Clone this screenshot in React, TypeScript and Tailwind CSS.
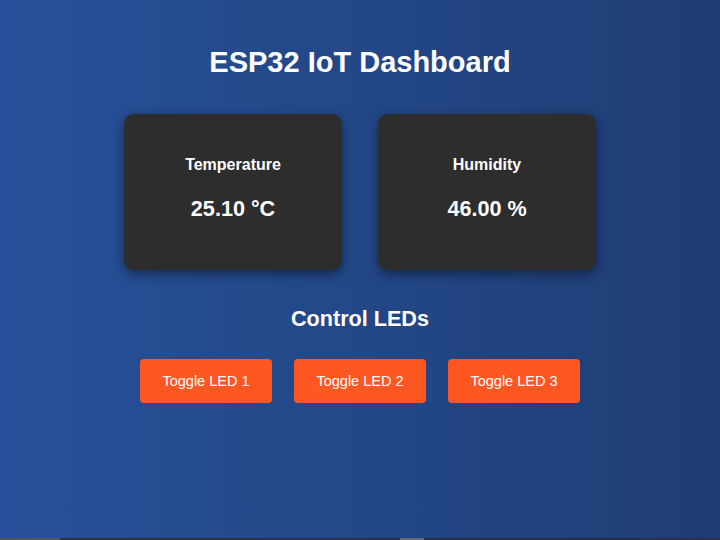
import React from 'react';

const sensors = [
  { label: 'Temperature', value: '25.10 °C' },
  { label: 'Humidity', value: '46.00 %' },
];

const leds = [1, 2, 3];

export default function App() {
  return (
    <div className="flex h-[540px] w-full flex-col overflow-hidden font-['Liberation_Sans',Arial,sans-serif] text-white">
      <main className="flex flex-1 flex-col items-center bg-[linear-gradient(to_right,#27519a,#1f3d74)]">
        <h1 className="mt-[45px] text-[29px] font-bold leading-[34px]">ESP32 IoT Dashboard</h1>

        <div className="mt-[35px] flex gap-[36px]">
          {sensors.map((s) => (
            <div
              key={s.label}
              className="flex h-[156px] w-[218px] flex-col items-center rounded-[10px] bg-[#2d2d2d] pt-[41px] shadow-[0_4px_12px_rgba(0,0,0,0.45)]"
            >
              <h3 className="text-[16px] font-bold leading-[20px]">{s.label}</h3>
              <p className="mt-[21px] text-[21.6px] font-bold leading-[26px]">{s.value}</p>
            </div>
          ))}
        </div>

        <h2 className="mt-[36px] text-[21.6px] font-bold leading-[26px]">Control LEDs</h2>

        <div className="mt-[27px] flex gap-[22px]">
          {leds.map((n) => (
            <button
              key={n}
              className="h-[44px] w-[132px] rounded-[4px] bg-[#ff5722] text-[14.5px] leading-5 text-white"
            >
              Toggle LED {n}
            </button>
          ))}
        </div>
      </main>
      <div className="flex h-[2px] bg-[#2e2e44]">
        <div className="w-[60px] bg-[#55555f]" />
        <div className="w-[340px]" />
        <div className="w-[24px] bg-[#6a6a78]" />
      </div>
    </div>
  );
}
